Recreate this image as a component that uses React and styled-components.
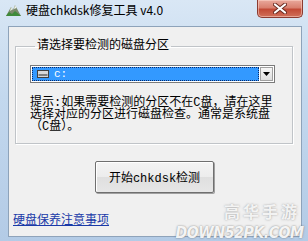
import React from 'react';
import styled, { createGlobalStyle } from 'styled-components';

const uiFont = '"Liberation Mono", "Noto Sans CJK SC", monospace';
const titleFont = '"Noto Sans CJK SC", "Liberation Sans", sans-serif';

const GlobalStyle = createGlobalStyle`
  html, body {
    margin: 0;
    padding: 0;
    width: 308px;
    height: 241px;
    overflow: hidden;
  }
`;

const Frame = styled.div`
  position: relative;
  width: 308px;
  height: 241px;
  box-sizing: border-box;
  padding: 0 6px 4px 8px;
  display: flex;
  flex-direction: column;
  background: linear-gradient(to bottom, #d9e7f5 0%, #c3d8ee 40%, #b3cbe6 100%);
  overflow: hidden;
`;

const TitleBar = styled.div`
  height: 26px;
  flex: none;
  display: flex;
  align-items: flex-start;
  margin-left: -2px;
`;

const AppIcon = styled.svg`
  width: 15px;
  height: 14px;
  margin-top: 3px;
  flex: none;
`;

const TitleText = styled.span`
  margin-left: 5px;
  margin-top: 2px;
  font-family: ${titleFont};
  font-size: 12px;
  line-height: 16px;
  color: #000;
`;

const CloseButton = styled.div`
  margin-left: auto;
  margin-right: -1px;
  width: 46px;
  height: 18px;
  box-sizing: border-box;
  border: 1px solid #8b3b31;
  border-top: none;
  border-radius: 0 0 5px 5px;
  background: linear-gradient(to bottom, #e9a99c 0%, #d9806f 45%, #c24a36 55%, #d0705a 100%);
  box-shadow: inset 0 0 0 1px rgba(255, 220, 210, 0.5);
  display: flex;
  align-items: center;
  justify-content: center;
`;

const Client = styled.div`
  flex: 1;
  display: flex;
  flex-direction: column;
  background: #f0f0f0;
  border: 1px solid #8ea3ba;
  padding-top: 13px;
`;

const GroupBox = styled.fieldset`
  margin: 0 8px 0 6px;
  padding: 13px 10px 10px 14px;
  border: 1px solid #c0c4c8;
  box-shadow: inset 1px 1px 0 #fff, 1px 1px 0 #fff;
  min-width: 0;
`;

const GroupTitle = styled.legend`
  margin-left: 5px;
  padding: 0 2px;
  font-family: ${uiFont};
  font-size: 12px;
  line-height: 12px;
  color: #000;
`;

const Combo = styled.div`
  width: 245px;
  height: 18px;
  box-sizing: border-box;
  border: 1px solid #7a7a7a;
  background: #fff;
  display: flex;
  padding: 1px;
`;

const ComboValue = styled.div`
  flex: 1;
  display: flex;
  align-items: center;
  background: #3399ff;
  outline: 1px dotted #0a2a6a;
  outline-offset: -1px;
  padding-left: 5px;
  font-family: ${uiFont};
  font-size: 11px;
  color: #fff;
`;

const DriveIcon = styled.svg`
  width: 12px;
  height: 8px;
  margin-right: 5px;
`;

const ComboButton = styled.div`
  width: 13px;
  margin-left: 1px;
  box-sizing: border-box;
  border: 1px solid #a0a0a0;
  background: linear-gradient(to bottom, #f6f6f6, #dedede);
  display: flex;
  align-items: center;
  justify-content: center;
`;

const Hint = styled.p`
  margin: 14px 0 0;
  font-family: ${uiFont};
  font-size: 12px;
  line-height: 12px;
  color: #000;
  white-space: nowrap;
`;

const ButtonRow = styled.div`
  display: flex;
  justify-content: center;
  margin-top: 17px;
  padding-right: 1px;
`;

const PushButton = styled.button`
  width: 119px;
  height: 32px;
  border: 1px solid #6f6f6f;
  border-radius: 2px;
  background: linear-gradient(to bottom, #f4f4f4 0%, #ececec 50%, #dfdfdf 51%, #e6e6e6 100%);
  box-shadow: inset 1px 1px 0 #fff, 1px 1px 0 #a0a0a0;
  font-family: ${uiFont};
  font-size: 12px;
  color: #000;
  padding: 0;
`;

const HelpLink = styled.a`
  margin: auto 0 9px 4px;
  font-family: ${uiFont};
  font-size: 12px;
  line-height: 12px;
  color: #1a3aa8;
  text-decoration: underline;
  align-self: flex-start;
`;

const Watermark = styled.div`
  position: absolute;
  right: 4px;
  bottom: 0;
  display: flex;
  flex-direction: column;
  align-items: flex-end;
  gap: 3px;
  font-family: "DejaVu Sans", "Noto Sans CJK SC", sans-serif;
  font-weight: bold;
  color: rgba(255, 255, 255, 0.92);
  text-shadow: 0 0 2px rgba(90, 90, 90, 0.8);
  pointer-events: none;
`;

const WatermarkCn = styled.span`
  font-size: 16px;
  line-height: 18px;
  letter-spacing: 3px;
  opacity: 0.7;
  margin-right: 4px;
`;

const WatermarkEn = styled.span`
  font-size: 16px;
  line-height: 16px;
  font-style: italic;
  letter-spacing: -0.5px;
  transform: scaleX(0.88);
  transform-origin: right;
`;

const App = () => {
  return (
    <>
      <GlobalStyle />
      <Frame>
        <TitleBar>
          <AppIcon viewBox="0 0 15 14">
            <path d="M0 13 L5 4 L7 7 L9 2 L15 13 Z" fill="#7c8a6c" />
            <path d="M5 4 L6.5 6.5 L4 8 Z" fill="#e8eee0" />
            <path d="M9 2 L10.5 5 L8 6 Z" fill="#f2f5ee" />
            <path d="M0 13 L3 9 L6 11 L9 8 L15 13 Z" fill="#3f8a3a" />
          </AppIcon>
          <TitleText>硬盘chkdsk修复工具 v4.0</TitleText>
          <CloseButton>
            <svg width="14" height="11" viewBox="0 0 14 11">
              <path d="M2 1.5 L12 9.5 M12 1.5 L2 9.5" stroke="#6a2a20" strokeWidth="4" strokeLinecap="round" />
              <path d="M2 1.5 L12 9.5 M12 1.5 L2 9.5" stroke="#fff" strokeWidth="2.2" strokeLinecap="round" />
            </svg>
          </CloseButton>
        </TitleBar>
        <Client>
          <GroupBox>
            <GroupTitle>请选择要检测的磁盘分区</GroupTitle>
            <Combo>
              <ComboValue>
                <DriveIcon viewBox="0 0 12 8">
                  <rect x="0.5" y="0.5" width="11" height="7" fill="#d8d8d8" stroke="#404040" />
                  <rect x="1.5" y="4" width="9" height="2" fill="#808080" />
                </DriveIcon>
                c:
              </ComboValue>
              <ComboButton>
                <svg width="7" height="4" viewBox="0 0 7 4">
                  <path d="M0 0 L7 0 L3.5 4 Z" fill="#000" />
                </svg>
              </ComboButton>
            </Combo>
            <Hint>
              提示:如果需要检测的分区不在C盘，请在这里<br />
              选择对应的分区进行磁盘检查。通常是系统盘<br />
              （C盘）。
            </Hint>
          </GroupBox>
          <ButtonRow>
            <PushButton>开始chkdsk检测</PushButton>
          </ButtonRow>
          <HelpLink href="#">硬盘保养注意事项</HelpLink>
        </Client>
        <Watermark>
          <WatermarkCn>高华手游</WatermarkCn>
          <WatermarkEn>DOWN52PK.COM</WatermarkEn>
        </Watermark>
      </Frame>
    </>
  );
};

export default App;
